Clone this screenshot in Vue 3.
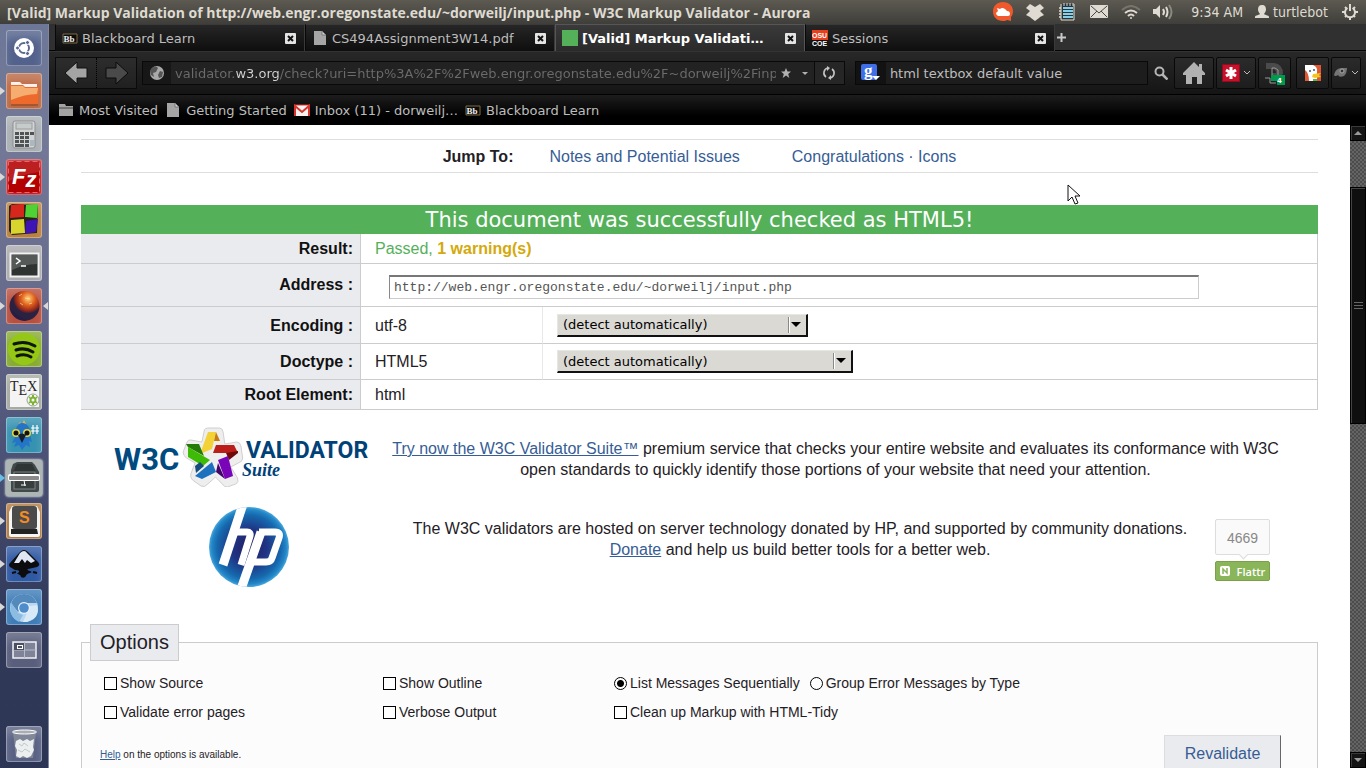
<script setup>
import { ref } from 'vue'

const tabs = [
  { title: 'Blackboard Learn', icon: 'bb' },
  { title: 'CS494Assignment3W14.pdf', icon: 'doc' },
  { title: '[Valid] Markup Validati…', icon: 'green', active: true },
  { title: 'Sessions', icon: 'osu' },
]
const bookmarks = [
  { title: 'Most Visited', icon: 'folder' },
  { title: 'Getting Started', icon: 'doc' },
  { title: 'Inbox (11) - dorweilj…', icon: 'gmail' },
  { title: 'Blackboard Learn', icon: 'bb' },
]
const url = ref('validator.w3.org/check?uri=http%3A%2F%2Fweb.engr.oregonstate.edu%2F~dorweilj%2Finput.php')
const query = ref('html textbox default value')
const address = ref('http://web.engr.oregonstate.edu/~dorweilj/input.php')
const grouping = ref('sequential')
</script>

<template>
  <div class="desktop">
    <header class="panel">
      <span class="panel-title">[Valid] Markup Validation of http://web.engr.oregonstate.edu/~dorweilj/input.php - W3C Markup Validator - Aurora</span>
      <div class="indicators">
        <svg width="20" height="20" viewBox="0 0 20 20"><path d="M10 0C16 0 20 4 20 9c0 3-1 5-2 6v4l-4-1c-1 1-3 1-4 1C4 19 0 15 0 9.500S4 0 10 0z" fill="#f0592b"/><path d="M5 14q-2-1-2-3l2-2-1-3 3 1q2-2 5 0l2 2q3 0 3 3 0 2-2 2z" fill="#fff"/></svg>
        <svg width="20" height="18" viewBox="0 0 20 18" fill="#dfdbd2"><path d="M5 1l5 3 5-3 4 4-4 3 4 4-4 2-1 1-4 3-4-3-1-1-4-2 4-4-4-3z"/></svg>
        <svg width="20" height="18" viewBox="0 0 18 18"><path d="M4 1h12v15H4z" fill="#2a333a"/><path d="M1 5h2M1 8h2M1 11h2M1 14h2" stroke="#dfdbd2" stroke-width="1.500"/><path d="M5 5h10M5 8h10M5 11h10M5 14h10" stroke="#86cfe8" stroke-width="2"/><path d="M3 1v16h13V1" fill="none" stroke="#dfdbd2"/><path d="M6 0v3M9 0v3M12 0v3M15 0v3" stroke="#dfdbd2"/></svg>
        <svg width="20" height="14" viewBox="0 0 18 14"><rect width="18" height="13" rx="1" fill="#dfdbd2"/><path d="M1 1l8 7 8-7M1 12l6-6M17 12l-6-6" fill="none" stroke="#4a4842"/></svg>
        <svg width="20" height="15" viewBox="0 0 20 15" fill="none" stroke-width="2"><path d="M1 5q9-8 18 0" stroke="#77746c"/><path d="M4 8q6-5 12 0M7 11q3-3 6 0" stroke="#dfdbd2"/><circle cx="10" cy="13" r="1" fill="#dfdbd2" stroke="none"/></svg>
        <svg width="20" height="16" viewBox="0 0 20 16" fill="none" stroke="#dfdbd2" stroke-width="2"><path d="M0 5h3l4-4v13l-4-4H0z" fill="#dfdbd2" stroke="none"/><path d="M10 5q2 3 0 6M13 3q3 5 0 10"/><path d="M16 1q5 7 0 14" stroke="#8b887f"/></svg>
        <span class="clock">9:34 AM</span>
        <span class="user"><svg width="14" height="14" viewBox="0 0 14 14" fill="#dfdbd2"><path d="M7 0c3 0 4 2 4 4.500S9.500 8 9 9c0 1 5 1 5 3v1H0v-1c0-2 5-2 5-3-.5-1-2-2-2-4.500S4 0 7 0z"/></svg>turtlebot</span>
        <svg width="16" height="16" viewBox="0 0 16 16" fill="none" stroke="#dfdbd2"><path d="M5.500 4a5 5 0 1 0 5 0" stroke-width="2"/><path d="M8 0v7" stroke-width="2"/><path d="M3 3l1.500 1.500M13 3l-1.500 1.500M0 8h3M13 8h3M3 13l1.500-1.500M13 13l-1.500-1.500M8 13v3" stroke-width="2"/></svg>
      </div>
    </header>

    <div class="workspace">
      <nav class="launcher" aria-label="Launcher">
        <button class="tile dash" aria-label="Dash"><svg viewBox="0 0 36 36"><circle cx="18" cy="18" r="10" fill="#fff"/><circle cx="18" cy="18" r="5" fill="none" stroke="#5a6890" stroke-width="2"/><path d="M18 18h-8M18 18l4-7M18 18l4 7" stroke="#fff" stroke-width="1.500"/><circle cx="18" cy="18" r="3.500" fill="#fff"/><g fill="#5a6890" stroke="#fff"><circle cx="11.500" cy="18" r="2"/><circle cx="21.500" cy="12.500" r="2"/><circle cx="21.500" cy="23.500" r="2"/></g></svg></button>
        <button class="tile files open" aria-label="Files"><svg viewBox="0 0 36 36"><path d="M5 9h9l2 2h15v8H5z" fill="#fff" opacity=".9"/><path d="M4 12h13l2 2h14l-1 17H5z" fill="#ee6a2c"/><path d="M5 13h12l2 2h13l-1 6q-12 0-26 6z" fill="#f6ae70"/><path d="M5 32h27" stroke="#86451f"/></svg></button>
        <button class="tile calc" aria-label="Calculator"><svg viewBox="0 0 36 36"><rect x="7" y="5" width="22" height="27" rx="2" fill="#d3d3d3" stroke="#8c8f92"/><rect x="10" y="7" width="16" height="6" fill="#c5ccca" stroke="#9a9d9d"/><g fill="#4e5355"><path d="M9 16h4v3H9zM14 16h4v3h-4zM19 16h4v3h-4zM24 16h4v3h-4zM9 20h4v3H9zM14 20h4v3h-4zM19 20h4v3h-4zM9 24h4v3H9zM14 24h4v3h-4zM19 24h4v3h-4zM9 28h9v3H9zM19 28h4v3h-4z"/></g><path d="M24 24h4v6h-4z" fill="#a9b9c4"/></svg></button>
        <button class="tile zilla open" aria-label="FileZilla"><svg viewBox="0 0 36 36"><rect x="2.500" y="2.500" width="31" height="31" fill="#b30000" stroke="#e36a6a" stroke-dasharray="5 3"/><path d="M3 3h30v10Q18 15 3 22z" fill="#fff" opacity=".12"/><text x="6" y="25" class="fz">F<tspan dy="3">z</tspan></text></svg></button>
        <button class="tile blocks" aria-label="Blocks"><svg viewBox="0 0 36 36"><path d="M3 4l3-2 26 1-1 28-25 2-3-4z" fill="#2b2117"/><path d="M5 3l13-1v13l-14 1z" fill="#d5271c"/><path d="M20 3l12-1-1 14-12-1z" fill="#4fd334"/><path d="M5 18l13-1 1 14-14 1z" fill="#d8d62e"/><path d="M20 19l12-2-2 13-11 2z" fill="#3e14b4"/></svg></button>
        <button class="tile term" aria-label="Terminal"><svg viewBox="0 0 36 36"><rect x="4.500" y="8.500" width="28" height="23" fill="#2f3331" stroke="#f2f2f2" stroke-width="2"/><path d="M6 10h25v9q-13 0-25 6z" fill="#555958"/><path d="M10 13l4 3-4 3M15 21h5" fill="none" stroke="#fff" stroke-width="1.500"/></svg></button>
        <button class="tile aurora open focused" aria-label="Aurora"><svg viewBox="0 0 36 36"><defs><radialGradient id="mars" cx=".62" cy=".25"><stop offset="0" stop-color="#ffd27b"/><stop offset=".45" stop-color="#e0601d"/><stop offset=".85" stop-color="#8d241b"/><stop offset="1" stop-color="#2b2140"/></radialGradient></defs><circle cx="18.500" cy="18" r="15" fill="url(#mars)"/><path d="M5 21q8 9 16 11-12 2-16-11z" fill="#241c4a" opacity=".75"/><path d="M13 8l3-2M19 10l5 1M23 16l3-1M14 15l3 2" stroke="#fff0a0" opacity=".6"/></svg></button>
        <button class="tile spot" aria-label="Spotify"><svg viewBox="0 0 36 36"><circle cx="18" cy="18" r="16" fill="#95c816"/><path d="M8 13q11-4 21 2M10 19q9-3 17 2M11 25q8-3 14 1" fill="none" stroke="#101604" stroke-width="3" stroke-linecap="round"/></svg></button>
        <button class="tile tex" aria-label="TeXstudio"><svg viewBox="0 0 36 36"><path d="M4 4h29v29H4z" fill="#f4f4f4"/><text x="4" y="17" class="tex-t">T<tspan dy="4">E</tspan><tspan dy="-4">X</tspan></text><circle cx="27" cy="26" r="6" fill="#fafafa" stroke="#9aa09a"/><circle cx="27" cy="26" r="2.500" fill="none" stroke="#7cb42f" stroke-width="2"/><path d="M27 21v2M27 29v2M23 23l1 1M31 23l-1 1M23 29l1-1M31 29l-1-1" stroke="#7cb42f" stroke-width="2"/></svg></button>
        <button class="tile bird" aria-label="Bird"><svg viewBox="0 0 36 36"><path d="M11 9l3-4 2 2 2-4 2 4z" fill="#e2b152"/><path d="M16 6c6 0 9 6 8 12l2 7-3-1 1 6-4-2-4 5-3-5-5 2 2-5-4 1 4-8c-1-7 1-12 6-12z" fill="#2474c8"/><circle cx="10" cy="16" r="4" fill="#e8d83c"/><circle cx="21" cy="16" r="4" fill="#e8d83c"/><circle cx="10" cy="16" r="2.500" fill="#111"/><circle cx="21" cy="16" r="2.500" fill="#111"/><path d="M12 18q4-3 8 0l-4 8z" fill="#16202a"/><path d="M27 8v9M31 8v9M25 11h8M25 14h8" stroke="#fff" stroke-width="1.200"/></svg></button>
        <button class="tile drawer active" aria-label="Archive"><svg viewBox="0 0 36 36"><path d="M7 4l4-2h15l3 3 4 7v18q0 2-2 2H7q-2 0-2-2V10z" fill="#43494a"/><path d="M11 4h15l4 8H7z" fill="#2f3435"/><rect x="8" y="12" width="21" height="17" fill="#373e3d" stroke="#7b8583"/><path d="M18 20l1 6M15 25h5" stroke="#fff"/><rect x="2" y="14" width="32" height="7" rx="2" fill="#fff"/><rect x="3" y="16" width="30" height="4" rx="1" fill="#8a8a8a"/></svg></button>
        <button class="tile subl open" aria-label="Sublime Text"><svg viewBox="0 0 36 36"><path d="M3 9l3-6h25l3 6v23q0 2-2 2H5q-2 0-2-2z" fill="#f5f5f5"/><rect x="6" y="3" width="25" height="23" rx="3" fill="#4b4b4b"/><path d="M5 26h26l1 5H5z" fill="#222"/><text x="13" y="20" class="subl-s">S</text></svg></button>
        <button class="tile ink open" aria-label="Inkscape"><svg viewBox="0 0 36 36"><path d="M18 4q2 0 4 2l10 10q3 3-1 5l-9 2q-2 1 2 2 3 1 0 2-4 1-4 3-2 3-5 1 0-2-3-3-2 0 1-2 1-2-4-2l-5-3q-2-2 0-4L14 6q2-2 4-2z" fill="#0c0c0e"/><path d="M18 5q2 0 3 2l8 8-4 2-4-3-2 3-3-4-3 4-5 0 6-10q2-2 4-2z" fill="#dfe5f2"/><path d="M27 26l4 1M6 27l4-1" stroke="#0c0c0e" stroke-width="2"/></svg></button>
        <button class="tile chrm open" aria-label="Chromium"><svg viewBox="0 0 36 36"><circle cx="18" cy="19" r="14" fill="#b9d7f0"/><path d="M5 14Q9 5 18 5t13 9H18l-6 9z" fill="#5489bb"/><path d="M5 13l7 11 5 2-4 7Q2 28 5 13z" fill="#8cbce2"/><path d="M24 17l7-1q4 13-10 17l-4 0z" fill="#d8e9f7"/><circle cx="18" cy="19" r="6" fill="#e6f2fc"/><circle cx="18" cy="19" r="4.800" fill="#4f8ccc"/></svg></button>
        <button class="tile wksp" aria-label="Workspaces"><svg viewBox="0 0 36 36"><rect x="7" y="10" width="23" height="16" fill="#7e8399" stroke="#f1f1f4" stroke-width="1.500"/><path d="M18.500 10v16M7 18h23" stroke="#b8bac6"/><rect x="8" y="11" width="10" height="7" fill="#4a4f62"/><rect x="11.500" y="13.500" width="5" height="3" fill="none" stroke="#fff"/></svg></button>
        <button class="tile trash" aria-label="Trash"><svg viewBox="0 0 36 36"><path d="M7 6l3 26h17l3-26z" fill="#8e94a0" opacity=".7"/><ellipse cx="18.500" cy="6" rx="12" ry="2" fill="#a9adb4" stroke="#fff"/><path d="M10 15l4-2 3 2 4-2 3 2 4-2-1 8 1 3-3 6-4 2-4-2-3 2-4-2 1-6-2-4z" fill="#eceff0"/><path d="M13 18l3 2 2-3 4 3M12 24l4 2 3-3 5 3" fill="none" stroke="#c4c8cb"/></svg></button>
      </nav>

      <section class="browser">
        <div class="tabstrip">
          <div v-for="t in tabs" :key="t.title" class="tab" :class="{ current: t.active }">
            <svg v-if="t.icon === 'bb'" width="16" height="16" viewBox="0 0 16 16"><path d="M1 4h14v9H1z" fill="#0b0b0b" stroke="#7d6d45"/><text x="1.500" y="12" class="bb">Bb</text></svg>
            <svg v-else-if="t.icon === 'doc'" width="16" height="16" viewBox="0 0 16 16"><path d="M2 1h8l4 4v10H2z" fill="#a5a5a5"/><path d="M10 1v4h4z" fill="#d8d8d8" stroke="#777"/></svg>
            <svg v-else-if="t.icon === 'green'" width="16" height="16" viewBox="0 0 16 16"><path d="M0 0h16v16H0z" fill="#55b05a"/></svg>
            <svg v-else width="16" height="16" viewBox="0 0 16 16"><path d="M0 0h16v10H0z" fill="#e8401c"/><text x="0" y="8" class="osu">OSU</text><path d="M0 10h16v6H0z" fill="#111"/><text x="0" y="16" class="osu">COE</text></svg>
            <span class="tab-title">{{ t.title }}</span>
            <button class="close" aria-label="Close tab"><svg width="11" height="11" viewBox="0 0 11 11"><rect width="11" height="11" rx="1" fill="#e4e4e4"/><path d="M3 3l5 5M8 3l-5 5" stroke="#111" stroke-width="2"/></svg></button>
          </div>
          <button class="newtab" aria-label="New tab"><svg width="9" height="9" viewBox="0 0 9 9"><path d="M4.500 0v9M0 4.500h9" stroke="#c8c8c8" stroke-width="2"/></svg></button>
        </div>

        <div class="navbar">
          <div class="history">
            <button aria-label="Back"><svg width="24" height="24" viewBox="0 0 24 24"><path d="M1 12L13 1v6h10v10H13v6z" fill="#a4a4a4" stroke="#111"/></svg></button>
            <button aria-label="Forward"><svg width="24" height="24" viewBox="0 0 24 24"><path d="M23 12L11 1v6H1v10h10v6z" fill="#4a4a4a" stroke="#0b0b0b"/></svg></button>
          </div>
          <div class="urlbar">
            <span class="identity"><svg width="16" height="16" viewBox="0 0 16 16"><circle cx="8" cy="8" r="7" fill="#a9a9a9"/><path d="M3 3q4-3 6 0l-2 4-3 1 1 4-3-2q-2-4 1-7zM11 6l3 1-1 5-3 1-1-3z" fill="#555"/></svg></span>
            <input v-model="url" class="url" aria-label="Address" />
            <button class="mini" aria-label="Bookmark"><svg width="10" height="10" viewBox="0 0 10 10"><path d="M5 0l1.500 3.500H10L7.200 6 8.300 10 5 7.600 1.700 10l1.100-4L0 3.500h3.500z" fill="#b0b0b0"/></svg></button>
            <button class="mini" aria-label="History"><svg width="6" height="3" viewBox="0 0 6 3"><path d="M0 0h6L3 3z" fill="#b0b0b0"/></svg></button>
            <button class="reload" aria-label="Reload"><svg width="14" height="14" viewBox="0 0 14 14" fill="none" stroke="#c4c4c4" stroke-width="1.600"><path d="M6 2a5 5 0 0 0-2 9M8 12a5 5 0 0 0 2-9"/><path d="M5 0l3 2-3 3zM9 14l-3-2 3-3z" fill="#c4c4c4" stroke="none"/></svg></button>
          </div>
          <div class="search">
            <span class="engine"><svg width="20" height="18" viewBox="0 0 20 18"><rect width="16" height="16" rx="2" fill="#3f6fe8"/><text x="3" y="12" class="gg">g</text><path d="M11 12h8l-4 4z" fill="#fff"/></svg></span>
            <input v-model="query" aria-label="Search" />
          </div>
          <button class="mag" aria-label="Search"><svg width="14" height="14" viewBox="0 0 14 14" fill="none" stroke="#b5b5b5"><circle cx="5.500" cy="5.500" r="4" stroke-width="2"/><path d="M8.500 8.500l5 5" stroke-width="2.500"/></svg></button>
          <button class="tool w-home" aria-label="Home"><svg width="24" height="24" viewBox="0 0 24 24"><path d="M12 1l5 5V3h3v6l3 3v2h-3v9h-5v-7h-5v7H4v-9H1v-2z" fill="#b1b1b1"/></svg></button>
          <button class="tool w-ext" aria-label="Extension"><svg width="18" height="18" viewBox="0 0 18 18"><rect x=".5" y=".5" width="17" height="17" fill="#c8102a" stroke="#8a1020"/><path d="M9 3v12M4 6l10 6M14 6L4 12" stroke="#fff" stroke-width="3"/></svg><svg width="6" height="4" viewBox="0 0 6 4"><path d="M0 0l3 3 3-3" fill="none" stroke="#bbb"/></svg></button>
          <button class="tool w-d" aria-label="Disconnect"><svg width="24" height="24" viewBox="0 0 24 24"><path d="M3 2h8q9 1 9 11l-5 4H9v-5h4q0-4-4-4H3z" fill="#4b4b4b"/><path d="M2 17h5v5h6M9 7v10h3l3-3V9l-3-2z" fill="none" stroke="#999"/><path d="M8 14h14v10H14V20H8z" fill="#009a4e"/><text x="14" y="22" class="four">4</text></svg></button>
          <button class="tool w-duck" aria-label="DuckDuckGo"><svg width="16" height="16" viewBox="0 0 16 16"><path d="M0 0h16v16H0z" fill="#de5833"/><path d="M0 0h8q5 2 4 7v9H4Q4 8 0 5z" fill="#fff"/><path d="M8 9l8-1-2 2 2 2-6 1-3-1z" fill="#f3c521"/><circle cx="5" cy="6" r="1" fill="#2b5a8a"/><circle cx="9" cy="5" r="1" fill="#2b5a8a"/><path d="M8 14h4v2H8z" fill="#63b345"/></svg></button>
          <button class="tool w-mask" aria-label="Monkey"><svg width="14" height="12" viewBox="0 0 14 12"><path d="M0 8q1-6 7-7h6q0 5-3 8-5 2-6-1-3 2-4 0z" fill="#747474"/><circle cx="8" cy="4" r="2" fill="#333" stroke="#aaa"/></svg><svg width="6" height="4" viewBox="0 0 6 4"><path d="M0 0l3 3 3-3" fill="none" stroke="#bbb"/></svg></button>
        </div>

        <div class="bookmarks">
          <a v-for="b in bookmarks" :key="b.title" href="#">
            <svg v-if="b.icon === 'folder'" width="16" height="16" viewBox="0 0 16 16"><path d="M1 2h6l1 2h7v10H1z" fill="#a3a3a3"/><path d="M1 6h14" stroke="#444"/></svg>
            <svg v-else-if="b.icon === 'doc'" width="16" height="16" viewBox="0 0 16 16"><path d="M2 1h8l4 4v10H2z" fill="#a5a5a5"/><path d="M10 1v4h4z" fill="#d8d8d8" stroke="#777"/></svg>
            <svg v-else-if="b.icon === 'gmail'" width="16" height="16" viewBox="0 0 16 16"><path d="M0 3h16v11H0z" fill="#f6f2f1"/><path d="M1 14V4l7 6 7-6v10" fill="none" stroke="#d8332c" stroke-width="2"/><path d="M0 3h16" stroke="#d8332c"/></svg>
            <svg v-else width="16" height="16" viewBox="0 0 16 16"><path d="M1 4h14v9H1z" fill="#0b0b0b" stroke="#7d6d45"/><text x="1.500" y="12" class="bb">Bb</text></svg>
            {{ b.title }}
          </a>
        </div>

        <div class="viewport">
          <main class="page">
            <div class="jump">
              <strong>Jump To:</strong>
              <a href="#">Notes and Potential Issues</a>
              <span class="jump-last"><a href="#">Congratulations · Icons</a></span>
            </div>

            <h2 class="banner">This document was successfully checked as HTML5!</h2>
            <table class="result">
              <colgroup><col class="c-name" /><col class="c-value" /><col /></colgroup>
              <tbody>
                <tr><th scope="row">Result:</th><td colspan="2"><span class="pass">Passed, </span><b class="warn">1 warning(s)</b></td></tr>
                <tr class="r-addr"><th scope="row"><label for="uri">Address :</label></th><td colspan="2"><input id="uri" v-model="address" class="uri" /></td></tr>
                <tr class="r-enc"><th scope="row"><label for="charset">Encoding :</label></th><td class="value">utf-8</td><td><span class="drop d-enc"><select id="charset"><option>(detect automatically)</option></select></span></td></tr>
                <tr class="r-doc"><th scope="row"><label for="doctype">Doctype :</label></th><td class="value">HTML5</td><td><span class="drop d-doc"><select id="doctype"><option>(detect automatically)</option></select></span></td></tr>
                <tr><th scope="row">Root Element:</th><td colspan="2">html</td></tr>
              </tbody>
            </table>

            <div class="suite">
              <svg width="256" height="60" viewBox="0 0 256 60" role="img" aria-label="W3C Validator Suite">
                <text x="0" y="43" class="w3c">W3C</text>
                <path transform="translate(19 0) scale(.85 1)" d="M88 1h14q3 0 4 4l2 12 14-2q4 0 5 4l2 12q0 3-3 4l-11 5 8 11q2 4-2 6l-10 3q-4 0-6-3l-8-7-9 7q-4 4-8 2l-10-6q-3-3-2-6l5-11-10-5q-4-2-4-6l4-9q2-4 5-3l13 2 3-12q1-2 4-2z" fill="#eee" stroke="#ccc"/>
                <path d="M94 5h8l-4 17-12 5z" fill="#f3d238"/><path d="M102 5l4 9-6 0z" fill="#c97a08"/>
                <path d="M102 18h18l4 8H99z" fill="#bb1d18"/><path d="M124 24v2l-9 7-3-7z" fill="#6e0b0a"/>
                <path d="M72 17h13l5 12-16-9z" fill="#267a08"/><path d="M74 20l22 13-7 6-15-9z" fill="#3dbb05"/>
                <path d="M81 39l5-4 4 4-8 7z" fill="#164d7d"/><path d="M81 49l17-14 4 10-14 7z" fill="#1d70bd"/>
                <path d="M104 33l10-4 5 20-8 3z" fill="#7a05b8"/><path d="M104 36l7 16-9-7z" fill="#44056a"/>
                <text x="132" y="31" class="vld">VALIDATOR</text><text x="128" y="49" class="ste">Suite</text>
              </svg>
              <p><a href="#">Try now the W3C Validator Suite™</a> premium service that checks your entire website and evaluates its conformance with W3C open standards to quickly identify those portions of your website that need your attention.</p>
            </div>

            <div class="host">
              <svg width="80" height="80" viewBox="0 0 80 80" role="img" aria-label="HP">
                <defs><radialGradient id="hpg"><stop offset="0" stop-color="#231f66"/><stop offset=".45" stop-color="#1f3484"/><stop offset=".8" stop-color="#1668ad"/><stop offset=".93" stop-color="#2387c8"/><stop offset="1" stop-color="#4aa8dc"/></radialGradient><clipPath id="disc"><circle cx="40" cy="40" r="40"/></clipPath></defs>
                <circle cx="40" cy="40" r="40" fill="url(#hpg)"/>
                <g clip-path="url(#disc)" stroke="#fff" fill="none"><path d="M34-3L14 58" stroke-width="9"/><path d="M52 25L31 85" stroke-width="9"/></g>
                <path d="M27 25H38q4 0 3 4L32 58M50 25h16q6 0 4 6l-7 20q-1 4-6 4H44" fill="none" stroke="#fff" stroke-width="7"/>
              </svg>
              <p>The W3C validators are hosted on server technology donated by HP, and supported by community donations.<br /><a href="#">Donate</a> and help us build better tools for a better web.</p>
              <div class="flattr">
                <span class="count">4669</span>
                <button class="flattr-btn"><svg width="10" height="10" viewBox="0 0 10 10"><rect width="10" height="10" rx="2" fill="#fff"/><path d="M3 8V3l4 4V2" fill="none" stroke="#8ab558" stroke-width="1.500"/></svg>Flattr</button>
              </div>
            </div>

            <fieldset class="options">
              <legend>Options</legend>
              <div class="choices">
                <label><input type="checkbox" />Show Source</label>
                <label><input type="checkbox" />Show Outline</label>
                <div class="radios">
                  <label><input v-model="grouping" type="radio" value="sequential" name="group" />List Messages Sequentially</label>
                  <label><input v-model="grouping" type="radio" value="type" name="group" />Group Error Messages by Type</label>
                </div>
                <label><input type="checkbox" />Validate error pages</label>
                <label><input type="checkbox" />Verbose Output</label>
                <label><input type="checkbox" />Clean up Markup with HTML-Tidy</label>
              </div>
              <div class="actions">
                <p><a href="#">Help</a> on the options is available.</p>
                <button class="revalidate">Revalidate</button>
              </div>
            </fieldset>
          </main>
          <div class="scrollbar" aria-hidden="true">
            <span class="step up"></span>
            <span class="thumb"><i></i><i></i><i></i></span>
            <span class="step down"></span>
          </div>
        </div>
      </section>
    </div>
    <svg class="pointer" width="14" height="22" viewBox="0 0 14 22"><path d="M1 1v16l4-4 3 7 3-1-3-7h5z" fill="#fff" stroke="#111"/></svg>
  </div>
</template>

<style>
body { margin: 0; overflow: hidden; }
</style>

<style scoped>
* { box-sizing: border-box; }
button { font: inherit; color: inherit; background: none; border: 0; padding: 0; }
svg { display: block; flex: none; }
.desktop { position: relative; height: 100vh; display: flex; flex-direction: column; overflow: hidden; background: #fff; font-family: "DejaVu Sans", sans-serif; font-size: 13px; }
.panel { flex: none; height: 24px; padding: 0 8px 0 7px; display: flex; align-items: center; justify-content: space-between; background: linear-gradient(#5c5a51, #3f3e3a); color: #dfdbd2; white-space: nowrap; }
.panel-title { font-family: "Open Sans", "Noto Sans", sans-serif; font-weight: bold; font-size: 14px; }
.indicators { display: flex; align-items: center; gap: 12px; font: 14px "DejaVu Sans Condensed", "DejaVu Sans", sans-serif; }
.clock { margin-left: 6px; }
.user { display: flex; align-items: center; gap: 4px; margin-right: 2px; }
.workspace { flex: 1; min-height: 0; display: flex; }

.launcher { flex: none; width: 49px; padding: 6px 6px; display: flex; flex-direction: column; gap: 7px; background: linear-gradient(#6d7797, #737997 15%, #65698b 40%, #4b5275 58%, #333b5c 78%, #2d3554); border-right: 1px solid #8085a3; }
.tile { position: relative; flex: none; width: 36px; height: 36px; border-radius: 3px; box-shadow: inset 0 0 0 1px rgba(255,255,255,.3), inset 0 8px 8px rgba(255,255,255,.2); }
.tile svg { width: 36px; height: 36px; }
.open::before, .active::before { content: ""; position: absolute; left: -6px; top: 14px; border: 4px solid transparent; border-left: 5px solid #d8d8d8; border-right: 0; }
.active::before { border-left-color: #67bfe6; }
.focused::after { content: ""; position: absolute; right: -6px; top: 14px; border: 4px solid transparent; border-right: 5px solid #d8d8d8; border-left: 0; }
.dash { background: #53628c; }
.files { background: #bb6a45; }
.calc { background: #a9afb3; }
.zilla { background: #c2222b; }
.blocks { background: #b9813f; }
.term { background: #aaa9ad; }
.aurora { background: #b8503f; }
.spot { background: #88ab34; }
.tex { background: #a5aba3; }
.bird { background: #3692b1; }
.drawer { background: #adb5b5; box-shadow: 0 0 2px 1px #c5cccd; }
.subl { background: #b07b42; }
.ink { background: #3059a3; }
.chrm { background: #3f7db8; }
.wksp { background: #585e7c; }
.trash { background: #596284; margin-top: auto; }
.fz { font: italic bold 22px "Liberation Sans", sans-serif; fill: #fff; }
.tex-t { font: 14px "Liberation Serif", serif; fill: #222; }
.subl-s { font: bold 16px "Liberation Sans", sans-serif; fill: #f48b24; }
.bb { font: bold 9px "Liberation Serif", serif; fill: #eee; }
.osu { font: bold 7px "Liberation Sans", sans-serif; fill: #fff; }
.gg { font: bold 17px "Liberation Serif", serif; fill: #fff; }
.four { font: bold 7px "DejaVu Sans", sans-serif; fill: #fff; }

.browser { flex: 1; min-width: 0; display: flex; flex-direction: column; }
.tabstrip { flex: none; height: 27px; padding-left: 6px; display: flex; background: #303030; border-bottom: 1px solid #050505; color: #bdbdbd; }
.tab { flex: 0 1 250px; min-width: 0; height: 27px; padding: 0 6px; display: flex; align-items: center; gap: 4px; background: linear-gradient(#262626, #0e0e0e); border-left: 1px solid #080808; border-right: 1px solid #3a3a3a; border-top: 1px solid #3a3a3a; }
.current { background: linear-gradient(#3a3a3a, #2a2a2a); color: #fff; font-weight: bold; border-color: #565656; }
.tab-title { flex: 1; white-space: nowrap; overflow: hidden; }
.newtab { margin-left: 2px; width: 9px; }
.close { margin-right: 2px; }
.navbar { flex: none; height: 43px; padding: 0 5px 0 6px; display: flex; align-items: center; background: linear-gradient(#282828, #151515); border-top: 1px solid #333; color: #bdbdbd; }
.history { display: flex; height: 32px; border: 1px solid #0a0a0a; background: linear-gradient(#2d2d2d, #202020); }
.history button { width: 40px; display: grid; place-items: center; }
.history button + button { border-left: 1px dotted #000; }
.urlbar { flex: 703; min-width: 0; height: 24px; margin-left: 5px; display: flex; align-items: center; background: #222; border: 1px solid #090909; }
.identity { width: 28px; height: 22px; display: grid; place-items: center; background: #171717; }
.navbar input { flex: 1; min-width: 0; height: 22px; margin: 0; padding: 0 0 0 4px; border: 0; outline: 0; font: inherit; color: #bdbdbd; background: #1d1d1d; }
.navbar .url { color: transparent; caret-color: #ddd; background: linear-gradient(to right, #6b6b6b 65px, #d5d5d5 65px, #d5d5d5 109px, #6b6b6b 109px); -webkit-background-clip: text; background-clip: text; }
.mini { width: 18px; height: 22px; display: grid; place-items: center; margin-left: 1px; }
.reload { width: 30px; height: 22px; display: grid; place-items: center; border-left: 1px solid #0a0a0a; background: #262626; }
.search { flex: 292; min-width: 0; height: 24px; margin-left: 10px; display: flex; align-items: center; background: #1d1d1d; border: 1px solid #090909; }
.engine { width: 30px; display: grid; place-items: center; background: #121212; height: 22px; }
.mag { width: 25px; display: grid; place-items: center; }
.tool { flex: none; height: 32px; margin-left: 2px; display: flex; align-items: center; justify-content: center; gap: 4px; border: 1px solid #090909; background: linear-gradient(#2b2b2b, #1d1d1d); border-radius: 2px; }
.w-home { width: 40px; margin-left: 1px; }
.w-ext { width: 40px; }
.w-d { width: 33px; }
.w-duck { width: 33px; margin-left: 5px; }
.w-mask { width: 30px; }
.bookmarks { flex: none; height: 31px; padding-left: 9px; display: flex; align-items: center; gap: 7px; background: linear-gradient(#1d1d1d, #000 70%); border-top: 1px solid #000; color: #bdbdbd; }
.bookmarks a { display: flex; align-items: center; gap: 5px; color: inherit; text-decoration: none; white-space: nowrap; }

.viewport { flex: 1; min-height: 0; display: flex; background: #fff; }
.page { flex: 1; min-width: 0; overflow: hidden; padding: 14px 32px 0; font: 16px/21px "Liberation Sans", Arial, sans-serif; color: #1f2126; }
.page a { color: #365d95; }
.jump { height: 34px; border: solid #ddd; border-width: 1px 0; display: flex; align-items: center; justify-content: center; gap: 36px; }
.jump a { text-decoration: none; }
.jump-last { margin-left: 16px; }
.banner { margin: 32px 0 0; height: 29px; background: #55b05a; color: #fff; text-align: center; font: 21px/30px "DejaVu Sans", sans-serif; }
.result { width: 100%; border-collapse: separate; border-spacing: 0; table-layout: fixed; border-right: 1px solid #ccc; }
.c-name { width: 280px; }
.c-value { width: 182px; }
.result th { padding: 0 7px 0 0; text-align: right; background: #eaebee; border-right: 1px solid #ccc; border-bottom: 1px solid #ccc; color: #111; }
.result td { padding: 0 14px; border-bottom: 1px solid #ccc; }
.result .value { border-right: 1px solid #e8e8e8; }
.result tr { height: 30px; }
.result .r-addr { height: 43px; }
.result .r-enc { height: 37px; }
.result .r-doc { height: 36px; }
.pass { color: #55b05a; }
.warn { color: #d4a90b; }
.uri { display: block; width: calc(100% - 118px); height: 24px; margin: 4px 0 0 14px; padding: 0 4px; border: 1px solid #ccc; border-top: 2px solid #777; border-left-color: #888; font: 13px "Liberation Mono", monospace; color: #555; }
.r-addr th { padding-bottom: 2px; }
.drop { position: relative; display: block; height: 23px; }
.d-enc { width: 251px; }
.d-doc { width: 296px; }
.drop select { display: block; width: 100%; height: 23px; padding: 0 5px; appearance: none; border: 1px solid #e6e6e2; border-right: 2px solid #111; border-bottom: 2px solid #111; border-radius: 0; background: #dad9d4; color: #000; font: 13px "DejaVu Sans", sans-serif; }
.drop::before { content: ""; position: absolute; right: 18px; top: 3px; height: 16px; border-left: 1px solid #888; border-right: 1px solid #fff; }
.drop::after { content: ""; position: absolute; right: 7px; top: 8px; border: 5px solid transparent; border-top-color: #000; border-bottom: 0; }

.suite { margin-top: 17px; padding: 0 39px 0 33px; display: flex; gap: 22px; align-items: center; text-align: center; }
.page p { flex: 1; margin: 0; }
.suite p { padding-top: 4px; }
.w3c { font: bold 31px Roboto, sans-serif; fill: #004a80; }
.vld { font: bold 23px Roboto, sans-serif; fill: #004178; }
.ste { font: italic bold 18px "Liberation Serif", serif; fill: #004178; }
.host { margin-top: 20px; padding: 0 48px 0 128px; display: flex; align-items: flex-start; text-align: center; }
.host p { margin: 11px 0 0 96px; }
.flattr { width: 55px; margin-top: 12px; display: flex; flex-direction: column; gap: 6px; }
.count { position: relative; height: 36px; border: 1px solid #ddd; border-radius: 2px; background: #fafafa; color: #888; font-size: 14px; line-height: 36px; }
.count::after { content: ""; position: absolute; left: 24px; bottom: -4px; width: 6px; height: 6px; background: #fafafa; border: solid #ddd; border-width: 0 1px 1px 0; rotate: 45deg; }
.flattr-btn { height: 20px; display: flex; align-items: center; justify-content: center; gap: 7px; border: 1px solid #7ba049; border-radius: 2px; background: #8ab558; color: #fff; font: 600 11px "Open Sans", sans-serif; }
.options { min-width: 0; margin: 37px 0 0; padding: 0 36px 20px 18px; border: 1px solid #ccc; background: #fcfcfc; }
.options legend { height: 37px; margin-left: -10px; padding: 0 9px; border: 1px solid #ccc; background: #eaebee; font-size: 20px; line-height: 34px; }
.choices { margin: 12px 0 0 4px; display: grid; grid-template-columns: 279px 231px 1fr; row-gap: 8px; font-size: 14px; }
.choices label { display: flex; align-items: center; gap: 3px; }
.choices input { flex: none; appearance: none; width: 13px; height: 13px; margin: 0; border: 1px solid #000; background: #fff; }
.choices input[type="radio"] { border-radius: 50%; }
.choices input[type="radio"]:checked { background: radial-gradient(circle, #000 3px, #fff 4px); }
.radios { display: flex; gap: 10px; }
.actions { margin-top: 12px; display: flex; align-items: flex-start; justify-content: space-between; }
.actions p { margin-top: 9px; font-size: 10px; }
.revalidate { height: 36px; width: 117px; border: 1px solid #ddd; border-right: 1px solid #666; border-bottom: 1px solid #666; background: #eaebee; color: #365d95; }

.scrollbar { flex: none; width: 16px; display: flex; flex-direction: column; justify-content: space-between; background: conic-gradient(#4c4c4c 25%, #646464 0 50%, #4c4c4c 0 75%, #646464 0) 0 0 / 4px 4px; }
.step { position: relative; height: 16px; background: #141414; border: 1px solid #000; box-shadow: inset 1px 1px #3a3a3a; }
.step::after { content: ""; position: absolute; left: 3px; top: 5px; border: 4px solid transparent; }
.up::after { border-bottom-color: #999; border-top: 0; }
.down::after { border-top-color: #999; border-bottom: 0; }
.thumb { height: 37%; margin-bottom: 282px; display: flex; flex-direction: column; align-items: center; justify-content: center; gap: 2px; background: #0f0f0f; border: 1px solid #000; box-shadow: inset 1px 1px #444; }
.thumb i { width: 9px; height: 1px; background: #666; }
.pointer { position: absolute; left: 1067px; top: 184px; }
</style>
